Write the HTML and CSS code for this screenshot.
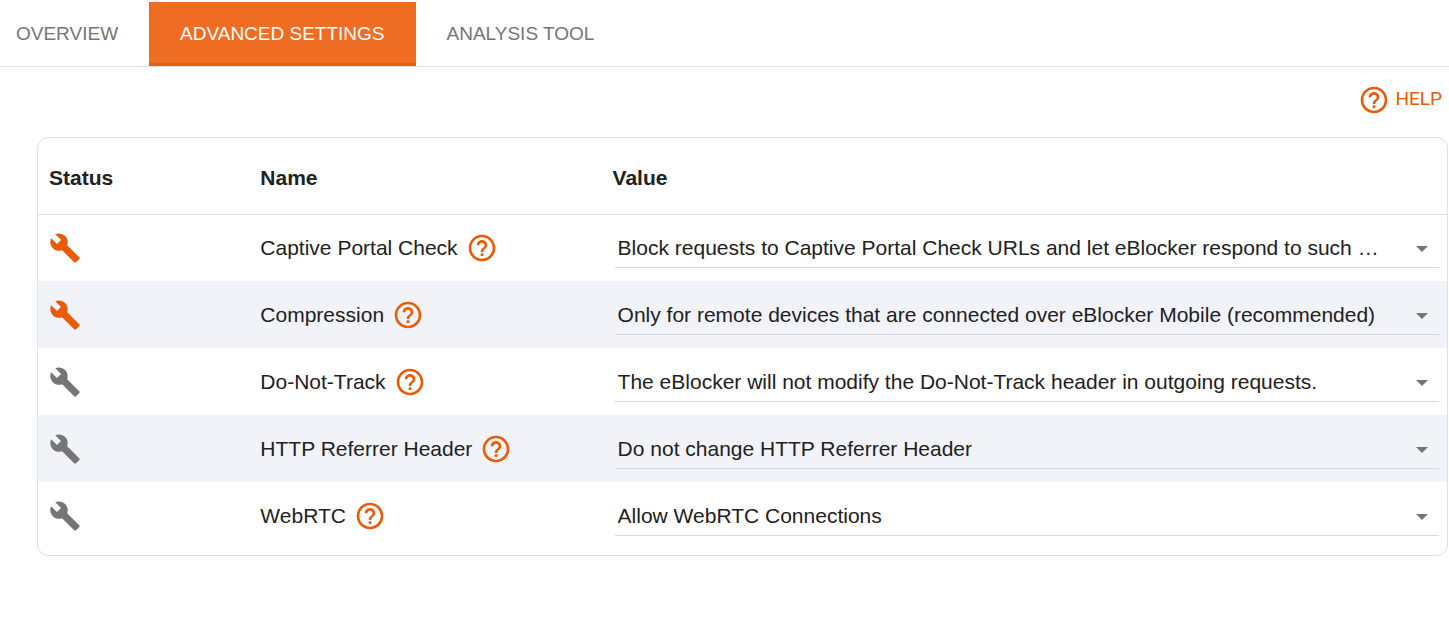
FILE: index.html
```html
<!DOCTYPE html>
<html lang="en">
<head>
    <meta charset="UTF-8">
    <title>eBlocker - Advanced Settings</title>
    <link rel="stylesheet" href="styles.css">
</head>
<body>
    <svg class="sprite" aria-hidden="true">
        <symbol id="wrench" viewBox="0 0 24 24">
            <path d="M22.7 19l-9.1-9.1c.9-2.3.4-5-1.5-6.9-2-2-5-2.4-7.4-1.3L9 6 6 9 1.6 4.7C.4 7.1.9 10.1 2.9 12.1c1.9 1.9 4.6 2.4 6.9 1.5l9.1 9.1c.4.4 1 .4 1.4 0l2.3-2.3c.5-.4.5-1.1.1-1.4z"/>
        </symbol>
        <symbol id="help" viewBox="0 0 24 24">
            <path d="M11 18h2v-2h-2v2zm1-16C6.48 2 2 6.48 2 12s4.48 10 10 10 10-4.48 10-10S17.52 2 12 2zm0 18c-4.41 0-8-3.59-8-8s3.59-8 8-8 8 3.59 8 8-3.59 8-8 8zm0-14c-2.21 0-4 1.79-4 4h2c0-1.1.9-2 2-2s2 .9 2 2c0 2-3 1.75-3 5h2c0-2.25 3-2.5 3-5 0-2.21-1.79-4-4-4z"/>
        </symbol>
    </svg>

    <nav class="tabs">
        <a class="tab" href="#overview">OVERVIEW</a>
        <a class="tab active" href="#advanced" aria-current="page">ADVANCED SETTINGS</a>
        <a class="tab" href="#analysis">ANALYSIS TOOL</a>
    </nav>

    <main>
        <div class="toolbar">
            <button class="help-button" type="button">
                <svg class="icon"><use href="#help"/></svg>
                HELP
            </button>
        </div>

        <div class="card">
            <table class="settings">
                <thead>
                    <tr>
                        <th class="col-status">Status</th>
                        <th class="col-name">Name</th>
                        <th class="col-value">Value</th>
                    </tr>
                </thead>
                <tbody>
                    <tr>
                        <td><svg class="icon changed"><use href="#wrench"/></svg></td>
                        <td>
                            <div class="name">
                                <label for="captivePortal">Captive Portal Check</label>
                                <button class="info" type="button" aria-label="Help: Captive Portal Check"><svg class="icon"><use href="#help"/></svg></button>
                            </div>
                        </td>
                        <td>
                            <div class="select">
                                <select id="captivePortal">
                                    <option>Block requests to Captive Portal Check URLs and let eBlocker respond to such requests.</option>
                                </select>
                            </div>
                        </td>
                    </tr>
                    <tr>
                        <td><svg class="icon changed"><use href="#wrench"/></svg></td>
                        <td>
                            <div class="name">
                                <label for="compression">Compression</label>
                                <button class="info" type="button" aria-label="Help: Compression"><svg class="icon"><use href="#help"/></svg></button>
                            </div>
                        </td>
                        <td>
                            <div class="select">
                                <select id="compression">
                                    <option>Only for remote devices that are connected over eBlocker Mobile (recommended)</option>
                                </select>
                            </div>
                        </td>
                    </tr>
                    <tr>
                        <td><svg class="icon"><use href="#wrench"/></svg></td>
                        <td>
                            <div class="name">
                                <label for="dnt">Do-Not-Track</label>
                                <button class="info" type="button" aria-label="Help: Do-Not-Track"><svg class="icon"><use href="#help"/></svg></button>
                            </div>
                        </td>
                        <td>
                            <div class="select">
                                <select id="dnt">
                                    <option>The eBlocker will not modify the Do-Not-Track header in outgoing requests.</option>
                                </select>
                            </div>
                        </td>
                    </tr>
                    <tr>
                        <td><svg class="icon"><use href="#wrench"/></svg></td>
                        <td>
                            <div class="name">
                                <label for="referrer">HTTP Referrer Header</label>
                                <button class="info" type="button" aria-label="Help: HTTP Referrer Header"><svg class="icon"><use href="#help"/></svg></button>
                            </div>
                        </td>
                        <td>
                            <div class="select">
                                <select id="referrer">
                                    <option>Do not change HTTP Referrer Header</option>
                                </select>
                            </div>
                        </td>
                    </tr>
                    <tr>
                        <td><svg class="icon"><use href="#wrench"/></svg></td>
                        <td>
                            <div class="name">
                                <label for="webrtc">WebRTC</label>
                                <button class="info" type="button" aria-label="Help: WebRTC"><svg class="icon"><use href="#help"/></svg></button>
                            </div>
                        </td>
                        <td>
                            <div class="select">
                                <select id="webrtc">
                                    <option>Allow WebRTC Connections</option>
                                </select>
                            </div>
                        </td>
                    </tr>
                </tbody>
            </table>
        </div>
    </main>
</body>
</html>
```
FILE: styles.css
```css
* {
    box-sizing: border-box;
}
body {
    margin: 0;
    padding-top: 2px;
    background: #fff;
    color: #212121;
    font-family: "Liberation Sans", Arial, sans-serif;
    font-size: 21px;
}
button, select {
    font: inherit;
    color: inherit;
    border: none;
    background: none;
    padding: 0;
    cursor: pointer;
}
.sprite {
    display: none;
}
.icon {
    display: block;
    width: 32px;
    height: 32px;
    fill: #757575;
}
.icon.changed {
    fill: #eb5a05;
}

/* tabs */
.tabs {
    display: flex;
    border-bottom: 1px solid #e0e0e0;
}
.tab {
    height: 64px;
    padding: 0 31px;
    line-height: 64px;
    font-size: 19px;
    color: #757575;
    text-decoration: none;
}
.tab:first-child {
    padding-left: 16px;
}
.tab.active {
    background: #ef6c23;
    color: #fff;
    border-bottom: 3px solid #eb5a05;
}

/* help link above the table */
.toolbar {
    display: flex;
    justify-content: flex-end;
    padding: 17px 7px 21px;
}
.help-button {
    display: flex;
    align-items: flex-start;
    gap: 5px;
    font-family: Roboto, sans-serif;
    font-size: 19px;
    line-height: 30px;
    color: #eb5a05;
}
.help-button .icon, .info .icon {
    fill: #eb5a05;
}

/* settings table */
.card {
    margin: 0 1px 0 37px;
    padding-bottom: 6px;
    border: 1px solid #e0e0e0;
    border-radius: 11px;
}
.settings {
    width: 100%;
    table-layout: fixed;
    border-collapse: separate;
    border-spacing: 0;
}
.settings th {
    height: 76px;
    padding: 4px 8px 0 11px;
    text-align: left;
}
.settings td {
    height: 67px;
    padding: 0 8px 0 11px;
}
.settings tbody tr:first-child td {
    border-top: 1px solid #e0e0e0;
}
.settings tbody tr:nth-child(even) {
    background: #f2f3f8;
}
.col-status {
    width: 15%;
}
.col-name {
    width: 25%;
}
.col-value {
    width: 60%;
}
.name {
    display: flex;
    align-items: center;
    gap: 8px;
}
.select {
    position: relative;
    margin-left: 2px;
}
.select select {
    display: block;
    width: 100%;
    height: 40px;
    padding: 0 56px 0 3px;
    border-bottom: 1px solid #d8d8dc;
    appearance: none;
    text-overflow: ellipsis;
}
.select::after {
    content: "";
    position: absolute;
    right: 11px;
    top: 18px;
    border: 6px solid transparent;
    border-top-color: #757575;
    border-bottom: none;
    pointer-events: none;
}
```
